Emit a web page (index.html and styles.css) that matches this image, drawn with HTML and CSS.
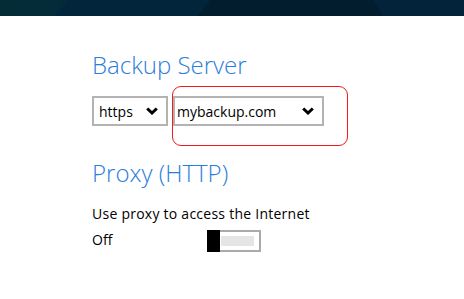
FILE: index.html
```html
<!DOCTYPE html>
<html lang="en">
<head>
    <meta charset="UTF-8">
    <title>Backup Server Settings</title>
    <link rel="stylesheet" href="styles.css">
</head>
<body>

<div class="topbar">
    <div class="shade shade-left"></div>
    <div class="shade shade-mid"></div>
</div>

<div class="content">
    <h2>Backup Server</h2>
    <div class="server-row">
        <div class="select select-proto">
            <span>https</span>
            <svg class="chev" viewBox="0 0 12 8" width="12" height="8"><path d="M1.2 1.5 L6 6 L10.8 1.5" fill="none" stroke="#000" stroke-width="3"/></svg>
        </div>
        <div class="host-wrap">
            <div class="select select-host">
                <span>mybackup.com</span>
                <svg class="chev" viewBox="0 0 12 8" width="12" height="8"><path d="M1.2 1.5 L6 6 L10.8 1.5" fill="none" stroke="#000" stroke-width="3"/></svg>
            </div>
            <div class="highlight"></div>
        </div>
    </div>

    <h2 class="proxy-title">Proxy (HTTP)</h2>
    <p class="label">Use proxy to access the Internet</p>
    <div class="toggle-row">
        <span class="state">Off</span>
        <div class="toggle">
            <div class="thumb"></div>
            <div class="track"><div class="fill"></div></div>
        </div>
    </div>
</div>

</body>
</html>
```

FILE: styles.css
```css
* {
    margin: 0;
    padding: 0;
    box-sizing: border-box;
}
body {
    font-family: 'Open Sans', 'Noto Sans', sans-serif;
    background-color: #fff;
    color: #000;
    width: 464px;
    height: 299px;
    overflow: hidden;
}

/* dark banner at the top */
.topbar {
    position: relative;
    height: 16px;
    background-color: #02233a;
    overflow: hidden;
}
.shade {
    position: absolute;
    top: 0;
    height: 16px;
}
.shade-left {
    left: 0;
    width: 210px;
    background-color: #03253b;
}
.shade-left::before {
    content: "";
    position: absolute;
    top: 0;
    left: 0;
    width: 68px;
    height: 16px;
    background: linear-gradient(90deg, #042c37, #032a39);
    clip-path: polygon(0 0, 100% 0, 82% 100%, 0 100%);
}
.shade-mid {
    left: 198px;
    width: 185px;
    background-color: #021e2e;
    clip-path: polygon(12px 0, 175px 0, 100% 100%, 0 100%);
}

.content {
    padding: 34px 0 0 92px;
}
h2 {
    font-weight: 300;
    font-size: 24px;
    line-height: 30px;
    color: #2b7ddb;
}
.server-row {
    display: flex;
    align-items: flex-start;
    gap: 5px;
    margin-top: 16px;
}
.select {
    display: flex;
    align-items: center;
    justify-content: space-between;
    height: 30px;
    border: 2px solid #b3b3b3;
    background: #fff;
    font-size: 14px;
    padding: 0 8px 0 5px;
}
.select-proto {
    width: 76px;
}
.select-host {
    width: 151px;
    padding-left: 2px;
}
.chev {
    display: block;
}
.host-wrap {
    position: relative;
}
.highlight {
    position: absolute;
    left: -1px;
    top: -10px;
    width: 176px;
    height: 60px;
    border: 1px solid #f01c1c;
    border-radius: 9px;
}

.proxy-title {
    margin-top: 32px;
}
.label {
    font-size: 14px;
    line-height: 18px;
    letter-spacing: 0.25px;
    margin-top: 17px;
}
.toggle-row {
    display: flex;
    align-items: flex-start;
    margin-top: 7px;
}
.state {
    font-size: 14px;
    line-height: 18px;
    width: 115px;
    margin-top: 1px;
}
.toggle {
    display: flex;
    height: 22px;
    width: 54px;
}
.thumb {
    width: 13px;
    background: #000;
}
.track {
    flex: 1;
    border: 2px solid #aaa;
    border-left: none;
    padding: 4px 5px 4px 1px;
}
.fill {
    height: 100%;
    background: #e5e5e5;
}
```
